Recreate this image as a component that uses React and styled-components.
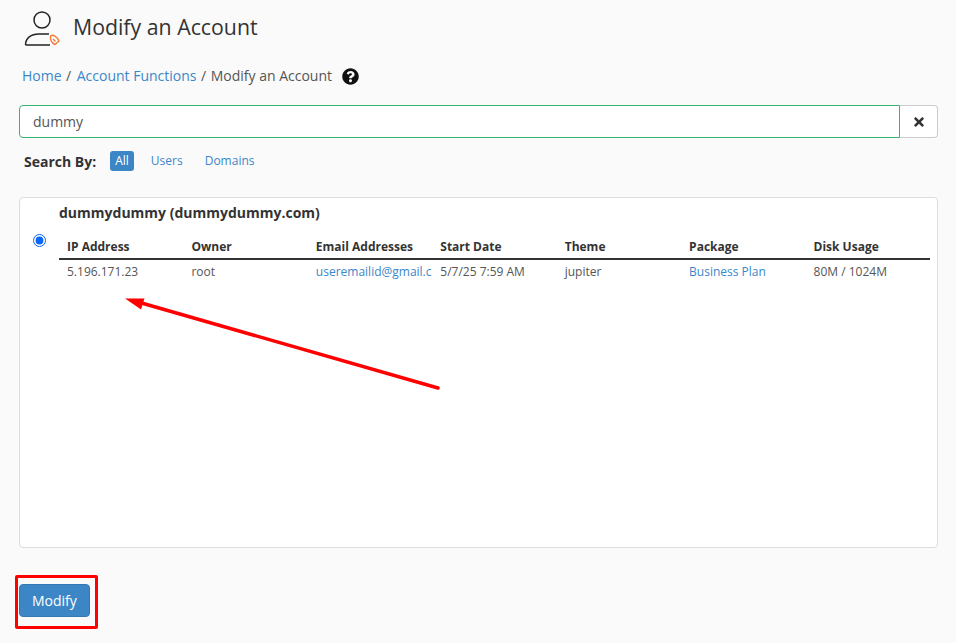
import React from 'react';
import styled, { createGlobalStyle } from 'styled-components';
import { FaQuestionCircle, FaTimes } from 'react-icons/fa';

const GlobalStyle = createGlobalStyle`
  body {
    margin: 0;
    background: #fafafa;
    font-family: "Open Sans", "Liberation Sans", sans-serif;
    color: #333;
  }
`;

const Page = styled.div`
  padding: 8px 18px 14px 19px;
`;

const Header = styled.div`
  display: flex;
  align-items: center;
  gap: 11px;
  padding-left: 3px;
  height: 40px;
`;

const Title = styled.h1`
  margin: -3px 0 0;
  font-size: 21.3px;
  font-weight: 400;
  color: #333;
  line-height: 30px;
`;

const Breadcrumb = styled.div`
  display: flex;
  align-items: center;
  margin: 18px 0 0 3px;
  font-size: 14px;
  line-height: 20px;
  color: #555;
  gap: 4.5px;
`;

const Crumb = styled.a`
  color: #3a87c9;
  text-decoration: none;
  margin-left: ${({ first }) => (first ? '0' : '1px')};
`;

const Help = styled.span`
  display: inline-flex;
  margin-left: 6px;
  font-size: 17px;
  color: #111;
`;

const SearchRow = styled.div`
  display: flex;
  margin-top: 19px;
  height: 33px;
`;

const SearchInput = styled.div`
  flex: 1;
  display: flex;
  align-items: center;
  background: #fff;
  border: 1px solid #3cb371;
  border-radius: 4px 0 0 4px;
  padding-left: 13px;
  font-size: 14px;
  color: #555;
`;

const ClearButton = styled.button`
  width: 38px;
  border: 1px solid #ccc;
  border-left: none;
  border-radius: 0 4px 4px 0;
  background: #fff;
  color: #333;
  display: flex;
  align-items: center;
  justify-content: center;
  font-size: 14px;
  padding: 0;
`;

const SearchBy = styled.div`
  display: flex;
  align-items: center;
  margin: 13px 0 0 5px;
  font-size: 14px;
`;

const SearchLabel = styled.span`
  font-weight: 700;
  margin-right: 14px;
`;

const Filter = styled.span`
  font-size: 12px;
  line-height: 20px;
  padding: 0 5px;
  margin-right: 12px;
  border-radius: 3px;
  color: ${({ active }) => (active ? '#fff' : '#3a87c9')};
  background: ${({ active }) => (active ? '#3d86c6' : 'transparent')};
`;

const Panel = styled.div`
  position: relative;
  margin-top: 26px;
  height: 351px;
  box-sizing: border-box;
  background: #fff;
  border: 1px solid #ddd;
  border-radius: 4px;
  padding: 5px 7px 0 13px;
  display: flex;
`;

const RadioCell = styled.div`
  width: 26px;
  padding-top: 27px;
`;

const Radio = styled.input`
  margin: 0;
  width: 13px;
  height: 13px;
  accent-color: #0b66f5;
`;

const Result = styled.div`
  flex: 1;
`;

const AccountName = styled.div`
  font-size: 14px;
  font-weight: 700;
  line-height: 20px;
  margin-bottom: 7px;
`;

const Table = styled.table`
  width: 100%;
  table-layout: fixed;
  border-collapse: collapse;
  font-size: 12px;
`;

const Th = styled.th`
  text-align: left;
  font-weight: 700;
  line-height: 18px;
  padding: 8px 8px 2px;
  border-bottom: 2px solid #333;
  white-space: nowrap;
`;

const Td = styled.td`
  line-height: 18px;
  padding: 3px 8px;
  white-space: nowrap;
  overflow: hidden;
  color: ${({ link }) => (link ? '#3a87c9' : '#555')};
`;

const Annotation = styled.svg`
  position: absolute;
  left: 0;
  top: 0;
  pointer-events: none;
`;

const Footer = styled.div`
  margin-top: 27px;
`;

const HighlightFrame = styled.div`
  display: inline-block;
  margin-left: -4px;
  padding: 6px 5px 9px 1px;
  border: 3px solid #f00;
  border-radius: 2px;
`;

const PrimaryButton = styled.button`
  display: block;
  font-family: inherit;
  font-size: 14px;
  line-height: 20px;
  color: #fff;
  background: #3d86c6;
  border: 1px solid #3579b4;
  border-radius: 4px;
  padding: 6px 12px;
  height: 33px;
`;

const AccountIcon = () => (
  <svg width="40" height="40" viewBox="0 0 40 40" fill="none">
    <circle cx="20" cy="12" r="8" stroke="#222" strokeWidth="1.5" />
    <path d="M3.5 37 C3.5 30 9 26 17 26 L27 26" stroke="#222" strokeWidth="1.5" />
    <path d="M3.5 37 L28 37" stroke="#222" strokeWidth="1.5" />
    <path
      d="M28.5 28 C31 26 35 28.5 37 33 L33 36.5 C30 35 28 32 28.5 28 Z M31 31 L33.5 33.5"
      stroke="#f47b3c"
      strokeWidth="1.4"
      strokeLinejoin="round"
    />
  </svg>
);

const columns = ['IP Address', 'Owner', 'Email Addresses', 'Start Date', 'Theme', 'Package', 'Disk Usage'];

const row = [
  { value: '5.196.171.23' },
  { value: 'root' },
  { value: 'useremailid@gmail.com', link: true },
  { value: '5/7/25 7:59 AM' },
  { value: 'jupiter' },
  { value: 'Business Plan', link: true },
  { value: '80M / 1024M' },
];

export default function App() {
  return (
    <>
      <GlobalStyle />
      <Page>
        <Header>
          <AccountIcon />
          <Title>Modify an Account</Title>
        </Header>
        <Breadcrumb>
          <Crumb first>Home</Crumb>
          <span>/</span>
          <Crumb>Account Functions</Crumb>
          <span>/</span>
          <span>Modify an Account</span>
          <Help>
            <FaQuestionCircle />
          </Help>
        </Breadcrumb>
        <SearchRow>
          <SearchInput>dummy</SearchInput>
          <ClearButton>
            <FaTimes />
          </ClearButton>
        </SearchRow>
        <SearchBy>
          <SearchLabel>Search By:</SearchLabel>
          <Filter active>All</Filter>
          <Filter>Users</Filter>
          <Filter>Domains</Filter>
        </SearchBy>
        <Panel>
          <RadioCell>
            <Radio type="radio" defaultChecked name="account" />
          </RadioCell>
          <Result>
            <AccountName>dummydummy (dummydummy.com)</AccountName>
            <Table>
              <thead>
                <tr>
                  {columns.map((c) => (
                    <Th key={c}>{c}</Th>
                  ))}
                </tr>
              </thead>
              <tbody>
                <tr>
                  {row.map((cell) => (
                    <Td key={cell.value} link={cell.link}>
                      {cell.value}
                    </Td>
                  ))}
                </tr>
              </tbody>
            </Table>
          </Result>
          <Annotation width="440" height="200">
            <line x1="418" y1="190" x2="118" y2="104" stroke="#f00" strokeWidth="3.5" strokeLinecap="round" />
            <polygon points="105,100.5 124.5,100.5 121,111.5" fill="#f00" />
          </Annotation>
        </Panel>
        <Footer>
          <HighlightFrame>
            <PrimaryButton>Modify</PrimaryButton>
          </HighlightFrame>
        </Footer>
      </Page>
    </>
  );
}
